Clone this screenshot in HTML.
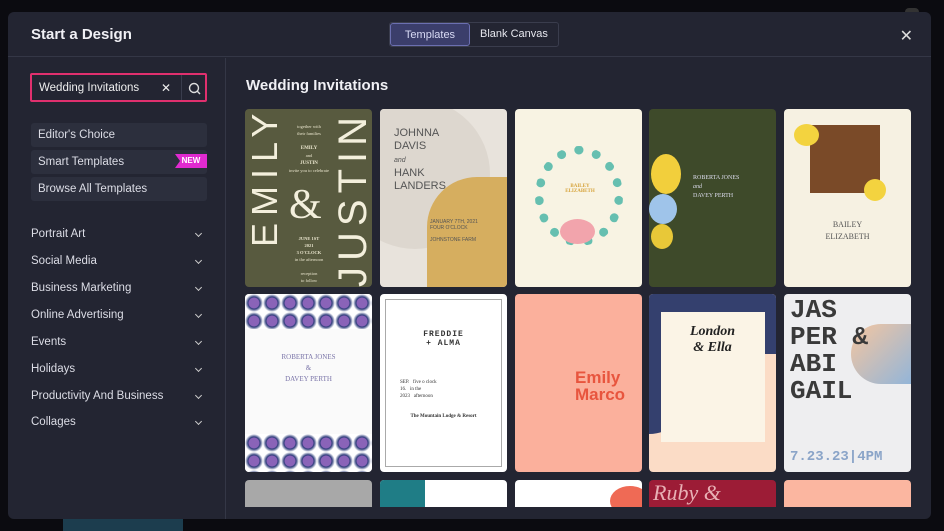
<!DOCTYPE html>
<html><head><meta charset="utf-8"><style>
*{box-sizing:border-box;margin:0;padding:0}
body{width:944px;height:531px;background:#0b0b10;font-family:"Liberation Sans",sans-serif;position:relative;overflow:hidden;color:#e6e7ee}
.modal{position:absolute;left:8px;top:12px;width:923px;height:507px;background:#232532;border-radius:6px;overflow:hidden}
.hdr{position:absolute;left:0;top:0;right:0;height:45px;border-bottom:1px solid #343746}
.title{position:absolute;left:23px;top:14px;font-size:15px;font-weight:bold;color:#f0f0f5}
.tabs{position:absolute;left:381px;top:10px;height:25px;border:1px solid #3a3d4d;border-radius:3px;display:flex;font-size:11px}
.tabs div{padding:0 10px;line-height:23px}
.tabs .on{background:#3b3e6b;border:1px solid #6b6fb0;border-radius:3px;color:#d8daf5;width:80px;text-align:center}
.close{position:absolute;right:18px;top:14px;font-size:16px;color:#ddd}
.side{position:absolute;left:0;top:46px;width:218px;bottom:0;border-right:1px solid #343746}
.search{position:absolute;left:22px;top:15px;width:177px;height:29px;border:2px solid #e0306e;border-radius:2px;font-size:11.5px;line-height:27px;padding-left:7px;color:#eee}
.search .x{position:absolute;left:129px;top:0;font-size:12px}
.search .q{position:absolute;left:149px;top:0;width:26px;height:25px;border-left:1px solid #3a3d4d}
.btn{position:absolute;left:23px;width:176px;height:24px;background:#2c2f3d;border-radius:3px;font-size:11.5px;line-height:24px;padding-left:7px;color:#dcdde6}
.new{position:absolute;right:0;top:4px;height:14px;width:32px;background:#e02ad0;color:#fff;font-size:8px;line-height:14px;text-align:center;font-weight:bold;clip-path:polygon(0 0,100% 0,100% 100%,0 100%,5px 50%)}
.cat{position:absolute;left:23px;width:172px;font-size:11.5px;color:#dcdde6}
.cat:after{content:"";position:absolute;right:2px;top:3px;width:4px;height:4px;border-right:1.3px solid #ccc;border-bottom:1.3px solid #ccc;transform:rotate(45deg)}
.h2{position:absolute;left:238px;top:65px;font-size:15px;font-weight:bold;color:#f0f0f5}
.c{position:absolute;width:127px;border-radius:4px;overflow:hidden;font-family:"Liberation Serif",serif}
.rot{position:absolute;transform:rotate(-90deg);transform-origin:0 0;white-space:nowrap;font-family:"Liberation Sans",sans-serif;color:#f3efdc}
</style></head><body>
<div style="position:absolute;left:905px;top:8px;width:14px;height:8px;background:#333;border-radius:6px"></div>
<div style="position:absolute;left:63px;top:519px;width:120px;height:12px;background:#1c3d4e"></div>
<div class="modal">
<div class="hdr"><div class="title">Start a Design</div>
<div class="tabs"><div class="on">Templates</div><div>Blank Canvas</div></div>
<div class="close">✕</div></div>
<div class="side">
<div class="search">Wedding Invitations<span class="x">✕</span><div class="q"><svg width="26" height="25"><circle cx="12" cy="13" r="4.5" fill="none" stroke="#ddd" stroke-width="1.4"/><line x1="15.3" y1="16.3" x2="18" y2="19" stroke="#ddd" stroke-width="1.4"/></svg></div></div>
<div class="btn" style="top:65px">Editor's Choice</div>
<div class="btn" style="top:92px">Smart Templates<div class="new">NEW</div></div>
<div class="btn" style="top:119px">Browse All Templates</div>
<div class="cat" style="top:170px">Portrait Art</div>
<div class="cat" style="top:197px">Social Media</div>
<div class="cat" style="top:224px">Business Marketing</div>
<div class="cat" style="top:251px">Online Advertising</div>
<div class="cat" style="top:278px">Events</div>
<div class="cat" style="top:305px">Holidays</div>
<div class="cat" style="top:332px">Productivity And Business</div>
<div class="cat" style="top:358px">Collages</div>
</div>
<div class="h2">Wedding Invitations</div>

<div class="c" style="left:237px;top:97px;height:178px;background:#585a3f;color:#eee">
<div class="rot" style="left:2px;top:138px;font-size:36px;line-height:36px;letter-spacing:7px">EMILY</div>
<div class="rot" style="left:88px;top:178px;font-size:40px;line-height:40px;letter-spacing:6px">JUSTIN</div>
<div style="position:absolute;left:44px;top:72px;font-size:42px;color:#f3efdc">&amp;</div>
<div style="position:absolute;left:40px;top:14px;font-size:4.5px;text-align:center;width:48px;line-height:7px;color:#e8e4cc">together with<br>their families<br><br><b style="font-size:5px">EMILY</b><br>and<br><b style="font-size:5px">JUSTIN</b><br>invite you to celebrate</div>
<div style="position:absolute;left:40px;top:126px;font-size:4.5px;text-align:center;width:48px;line-height:7px;color:#e8e4cc"><b>JUNE 1ST<br>2021</b><br><b>3 O'CLOCK</b><br>in the afternoon<br><br>reception<br>to follow</div></div>
<div class="c" style="left:372px;top:97px;height:178px;background:#e8e3dc;color:#555">
<div style="position:absolute;left:-40px;top:-10px;width:150px;height:150px;background:#ddd7cf;border-radius:50%"></div>
<div style="position:absolute;right:-30px;bottom:-10px;width:110px;height:120px;background:#d6ae5f;border-radius:50px 0 0 0"></div>
<div style="position:absolute;left:14px;top:18px;font:11px 'Liberation Sans';line-height:13px">JOHNNA<br>DAVIS<br><i style="font-size:7px">and</i><br>HANK<br>LANDERS</div>
<div style="position:absolute;left:50px;top:110px;font:5px 'Liberation Sans'">JANUARY 7TH, 2021<br>FOUR O'CLOCK<br><br>JOHNSTONE FARM</div></div>
<div class="c" style="left:507px;top:97px;height:178px;background:#f8f3e3">
<div style="position:absolute;left:20px;top:37px;width:88px;height:100px;border:9px dotted #66bfb0;border-radius:50%"></div>
<div style="position:absolute;left:45px;top:110px;width:35px;height:25px;background:#f2a4ac;border-radius:50%"></div>
<div style="position:absolute;left:35px;top:75px;width:60px;font-size:5px;color:#d6a33b;text-align:center;font-weight:bold">BAILEY<br>ELIZABETH</div></div>
<div class="c" style="left:641px;top:97px;height:178px;background:#3e4a2a;color:#dde">
<div style="position:absolute;left:2px;top:45px;width:30px;height:40px;background:#f2cf3c;border-radius:50%"></div>
<div style="position:absolute;left:0;top:85px;width:28px;height:30px;background:#9fc4ea;border-radius:50%"></div>
<div style="position:absolute;left:2px;top:115px;width:22px;height:25px;background:#e8c838;border-radius:50%"></div>
<div style="position:absolute;left:44px;top:65px;font-size:6px;line-height:9px">ROBERTA JONES<br><i>and</i><br>DAVEY PERTH</div></div>
<div class="c" style="left:776px;top:97px;height:178px;background:#f6f1e2;color:#555">
<div style="position:absolute;left:26px;top:16px;width:70px;height:68px;background:#7a4a28"></div>
<div style="position:absolute;left:10px;top:15px;width:25px;height:22px;background:#f3d33f;border-radius:50%"></div>
<div style="position:absolute;left:80px;top:70px;width:22px;height:22px;background:#f3d33f;border-radius:50%"></div>
<div style="position:absolute;left:0;top:110px;width:127px;text-align:center;font-size:8px;line-height:12px">BAILEY<br>ELIZABETH</div></div>

<div class="c" style="left:237px;top:282px;height:178px;background:#fafafa;color:#7a74a8">
<div style="position:absolute;left:0;top:0;width:127px;height:35px;background:radial-gradient(circle,#8a63b8 5px,#2d3c7a 6px,#fff 9px) 0 0/18px 18px"></div>
<div style="position:absolute;left:0;bottom:0;width:127px;height:38px;background:radial-gradient(circle,#8a63b8 5px,#2d3c7a 6px,#fff 9px) 0 0/18px 18px"></div>
<div style="position:absolute;left:0;top:58px;width:127px;text-align:center;font-size:7px;line-height:11px">ROBERTA JONES<br>&amp;<br>DAVEY PERTH</div></div>
<div class="c" style="left:372px;top:282px;height:178px;background:#fff;color:#333">
<div style="position:absolute;left:5px;top:5px;right:5px;bottom:5px;border:1px solid #aaa"></div>
<div style="position:absolute;left:0;top:36px;width:127px;text-align:center;font:bold 8px 'Liberation Mono';letter-spacing:1px">FREDDIE<br>+ ALMA</div>
<div style="position:absolute;left:20px;top:85px;font-size:5px;line-height:7px">SEP. &nbsp; five o clock<br>16. &nbsp; in the<br>2023 &nbsp; afternoon</div>
<div style="position:absolute;left:0;top:120px;width:127px;text-align:center;font-size:5px;font-weight:bold">The Mountain Lodge &amp; Resort</div></div>
<div class="c" style="left:507px;top:282px;height:178px;background:#fbb09c">
<div style="position:absolute;left:60px;top:75px;font:bold 17px 'Liberation Sans';color:#e8553e;line-height:17px">Emily<br>Marco</div></div>
<div class="c" style="left:641px;top:282px;height:178px;background:#fbdcc6">
<div style="position:absolute;left:0;top:0;width:127px;height:60px;background:#34406e"></div>
<div style="position:absolute;left:0;top:40px;width:40px;height:100px;background:#34406e;border-radius:0 0 40px 0"></div>
<div style="position:absolute;left:12px;top:18px;width:104px;height:130px;background:#fbf4e6"></div>
<div style="position:absolute;left:0;top:30px;width:127px;text-align:center;font:italic bold 14px 'Liberation Serif';color:#222;line-height:16px">London<br>&amp; Ella</div></div>
<div class="c" style="left:776px;top:282px;height:178px;background:#eeeef0;color:#333">
<div style="position:absolute;right:0;top:30px;width:60px;height:60px;background:linear-gradient(135deg,#f5c6a0,#93b5d8);border-radius:30px 0 0 30px"></div>
<div style="position:absolute;left:6px;top:3px;font:bold 26px 'Liberation Mono';line-height:27px;color:#3a3a3a">JAS<br>PER &amp;<br>ABI<br>GAIL</div>
<div style="position:absolute;left:6px;top:155px;font:bold 14px 'Liberation Mono';color:#8aa4c8">7.23.23|4PM</div></div>

<div class="c" style="left:237px;top:468px;height:27px;border-radius:4px 4px 0 0;background:#a8a8a8"></div>
<div class="c" style="left:372px;top:468px;height:27px;border-radius:4px 4px 0 0;background:#fff"><div style="width:45px;height:27px;background:#1f7d86"></div></div>
<div class="c" style="left:507px;top:468px;height:27px;border-radius:4px 4px 0 0;background:#fff"><div style="position:absolute;left:95px;top:6px;width:40px;height:30px;border-radius:50%;background:#ef6a55"></div></div>
<div class="c" style="left:641px;top:468px;height:27px;border-radius:4px 4px 0 0;background:#9c1c36;color:#e8b0b5;font:italic 22px 'Liberation Serif';padding-left:4px">Ruby &amp;</div>
<div class="c" style="left:776px;top:468px;height:27px;border-radius:4px 4px 0 0;background:#fbb6a0"></div>
</div>
</body></html>
